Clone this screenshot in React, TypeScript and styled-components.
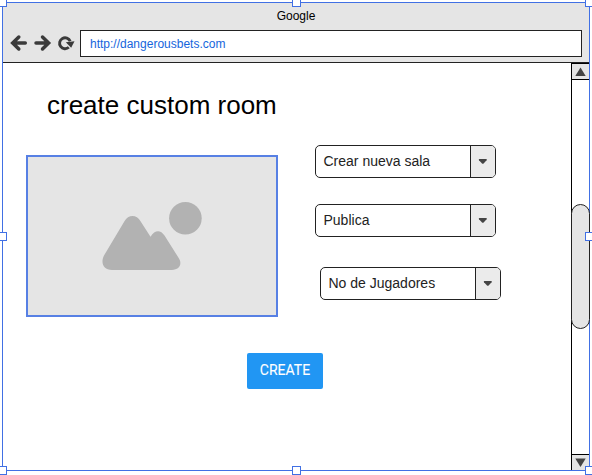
import React from "react";
import styled, { createGlobalStyle } from "styled-components";

const GlobalStyle = createGlobalStyle`
  * { box-sizing: border-box; }
  html, body { margin: 0; padding: 0; background: #fff; overflow: hidden; }
`;

const Canvas = styled.div`
  width: 592px;
  height: 475px;
  padding: 2px;
  overflow: hidden;
  background: #fff;
  font-family: "Liberation Sans", Arial, sans-serif;
`;

const BrowserWindow = styled.div`
  position: relative;
  display: flex;
  flex-direction: column;
  width: 588px;
  height: 469px;
  border: 1px solid #4170e4;
`;

const Handle = styled.span<{ $x: number; $y: number }>`
  position: absolute;
  left: ${(p) => p.$x}px;
  top: ${(p) => p.$y}px;
  width: 9px;
  height: 9px;
  background: #fff;
  border: 1px solid #4170e4;
`;

const Header = styled.header`
  height: 60px;
  flex: none;
  background: #e5e5e5;
  border-bottom: 1px solid #222;
`;

const WindowTitle = styled.div`
  height: 27px;
  padding-top: 6px;
  font-size: 12px;
  line-height: 14px;
  text-align: center;
  color: #000;
`;

const Toolbar = styled.div`
  display: flex;
  align-items: center;
  height: 27px;
  padding: 0 7px 0 6px;
`;

const NavIcons = styled.svg`
  flex: none;
  width: 71px;
  height: 27px;
`;

const AddressBar = styled.div`
  flex: 1;
  height: 27px;
  padding-left: 9px;
  border: 1px solid #222;
  background: #fff;
  color: #1565dc;
  font-size: 12px;
  line-height: 26px;
`;

const Body = styled.div`
  display: flex;
  flex: 1;
  min-height: 0;
`;

const Content = styled.main`
  flex: 1;
  padding: 26px 0 0 23px;
`;

const Heading = styled.h1`
  margin: 0 0 0 21px;
  height: 66px;
  font-size: 26px;
  line-height: 32px;
  font-weight: 400;
  color: #000;
`;

const Columns = styled.div`
  display: flex;
  align-items: flex-start;
  gap: 37px;
`;

const ImagePlaceholder = styled.div`
  width: 252px;
  height: 162px;
  border: 2px solid #5780e4;
  background: #e5e5e5;

  svg { display: block; }
`;

const Fields = styled.div`
  display: flex;
  flex-direction: column;
  margin-top: -10px;
`;

const Select = styled.div<{ $gap?: number; $indent?: number }>`
  display: flex;
  width: 181px;
  height: 33px;
  margin: ${(p) => p.$gap ?? 0}px 0 0 ${(p) => p.$indent ?? 0}px;
  border: 1px solid #222;
  border-radius: 5px;
  overflow: hidden;
  background: #fff;
`;

const SelectLabel = styled.span`
  flex: 1;
  padding-left: 7.5px;
  color: #222;
  font-size: 14px;
  line-height: 31px;
`;

const SelectArrow = styled.span`
  width: 25px;
  border-left: 1px solid #222;
  background: #ebebeb;

  svg { display: block; }
`;

const CreateButton = styled.button`
  display: block;
  width: 76px;
  height: 36px;
  margin: 36px 0 0 221px;
  padding: 0 0 2px;
  border: 0;
  border-radius: 2px;
  background: #2196f3;
  color: #fff;
  font: 400 14px/34px Roboto, sans-serif;
  -webkit-text-stroke: 0.1px #fff;
`;

const Scrollbar = styled.aside`
  display: flex;
  flex-direction: column;
  width: 18px;
  border-left: 1px solid #000;
  border-top: 1px solid #000;
  background: #fff;
`;

const ScrollButton = styled.div<{ $end?: boolean }>`
  height: 16px;
  flex: none;
  background: #e5e5e5;
  border-bottom: ${(p) => (p.$end ? "0" : "1px solid #000")};
  border-top: ${(p) => (p.$end ? "1px solid #000" : "0")};

  svg { display: block; }
`;

const Track = styled.div`
  flex: 1;
  padding-top: 124px;
`;

const Thumb = styled.div`
  width: 19px;
  height: 125px;
  margin-left: -1px;
  border: 1px solid #222;
  border-radius: 10px;
  background: #e5e5e5;
`;

const handles = [
  [-5, -5], [289, -5], [582, -5],
  [-5, 229], [582, 229],
  [-5, 463], [289, 463], [582, 463],
];

const options = [
  { label: "Crear nueva sala", gap: 0, indent: 0 },
  { label: "Publica", gap: 26, indent: 0 },
  { label: "No de Jugadores", gap: 30, indent: 5 },
];

export default function App() {
  return (
    <Canvas>
      <GlobalStyle />
      <BrowserWindow>
        <Header>
          <WindowTitle>Google</WindowTitle>
          <Toolbar>
            <NavIcons viewBox="0 0 71 27" fill="none" stroke="#3b3b3b" strokeWidth="3.5" strokeLinecap="round" strokeLinejoin="miter">
              <path d="M16.300 13H5M9.800 7L3.700 13l6.100 6" />
              <path d="M27 13h11.300M33.500 7L39.600 13l-6.100 6" />
              <path d="M59.800 17.300A5.500 5.500 0 1 1 61.200 11.200" strokeWidth="2.900" strokeLinecap="butt" />
              <path d="M56.800 12.200l8.700-.9-3.300 6.400z" fill="#3b3b3b" stroke="none" />
            </NavIcons>
            <AddressBar>http://dangerousbets.com</AddressBar>
          </Toolbar>
        </Header>
        <Body>
          <Content>
            <Heading>create custom room</Heading>
            <Columns>
              <ImagePlaceholder>
                <svg width="248" height="158" fill="#b2b2b2">
                  <circle cx="157.4" cy="61.2" r="16.3" />
                  <path d="M76 98.500L96.300 64.500C100.500 57.200 108.500 57.200 112.700 64.500L122.500 79.700C127 72.500 132.500 72.500 136.500 78.500L151 101.500C154.500 107.500 151 113 144 113H84C75 113 72.500 105.500 76 98.500Z" />
                </svg>
              </ImagePlaceholder>
              <Fields>
                {options.map((o) => (
                  <Select key={o.label} $gap={o.gap} $indent={o.indent}>
                    <SelectLabel>{o.label}</SelectLabel>
                    <SelectArrow>
                      <svg width="24" height="31">
                        <path d="M8.300 13h7q1 .3.300 1.200l-3 3.200q-.8.700-1.600 0l-3-3.200q-.7-.9.300-1.200z" fill="#444" />
                      </svg>
                    </SelectArrow>
                  </Select>
                ))}
              </Fields>
            </Columns>
            <CreateButton>CREATE</CreateButton>
          </Content>
          <Scrollbar>
            <ScrollButton>
              <svg width="17" height="15"><path d="M8.500 3.500L13.700 12H3.300z" fill="#444" /></svg>
            </ScrollButton>
            <Track><Thumb /></Track>
            <ScrollButton $end>
              <svg width="17" height="15"><path d="M3.300 3.500h10.400L8.500 12z" fill="#444" /></svg>
            </ScrollButton>
          </Scrollbar>
        </Body>
        {handles.map(([x, y]) => (
          <Handle key={`${x}:${y}`} $x={x} $y={y} />
        ))}
      </BrowserWindow>
    </Canvas>
  );
}
